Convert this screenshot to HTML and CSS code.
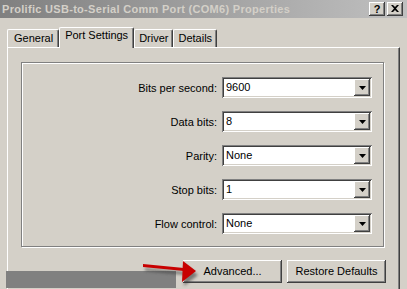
FILE: index.html
```html
<!DOCTYPE html>
<html lang="en">

<head>
  <meta charset="UTF-8">
  <title>Prolific USB-to-Serial Comm Port (COM6) Properties</title>
  <link rel="stylesheet" href="styles.css">
</head>

<body>

  <div class="window">

    <!-- title bar -->
    <div class="titlebar">
      <div class="title">Prolific USB-to-Serial Comm Port (COM6) Properties</div>
      <div class="caption-btn help">?</div>
      <div class="caption-btn close">
        <svg width="8" height="7" viewBox="0 0 8 7">
          <path d="M0 0h2l2 2 2-2h2L5 3.5 8 7H6L4 5 2 7H0l3-3.5z" fill="#000" />
        </svg>
      </div>
    </div>

    <!-- tabs -->
    <div class="tabs">
      <div class="tab">General</div>
      <div class="tab active">Port Settings</div>
      <div class="tab">Driver</div>
      <div class="tab">Details</div>
    </div>

    <div class="panel">
      <div class="group">
        <div class="row">
          <label>Bits per second:</label>
          <div class="combo"><span class="value">9600</span><span class="drop"><svg width="7" height="4"><path d="M0 0h7L3.5 4z" /></svg></span></div>
        </div>
        <div class="row">
          <label>Data bits:</label>
          <div class="combo"><span class="value">8</span><span class="drop"><svg width="7" height="4"><path d="M0 0h7L3.5 4z" /></svg></span></div>
        </div>
        <div class="row">
          <label>Parity:</label>
          <div class="combo"><span class="value">None</span><span class="drop"><svg width="7" height="4"><path d="M0 0h7L3.5 4z" /></svg></span></div>
        </div>
        <div class="row">
          <label>Stop bits:</label>
          <div class="combo"><span class="value">1</span><span class="drop"><svg width="7" height="4"><path d="M0 0h7L3.5 4z" /></svg></span></div>
        </div>
        <div class="row">
          <label>Flow control:</label>
          <div class="combo"><span class="value">None</span><span class="drop"><svg width="7" height="4"><path d="M0 0h7L3.5 4z" /></svg></span></div>
        </div>
      </div>

      <div class="actions">
        <div class="btn">Advanced...</div>
        <div class="btn">Restore Defaults</div>
      </div>
    </div>

    <!-- redacted strip and the red pointer drawn over the dialog -->
    <div class="redact"></div>
    <svg class="pointer" width="64" height="32" viewBox="0 0 64 32">
      <defs>
        <filter id="soft" x="-20%" y="-40%" width="140%" height="180%">
          <feGaussianBlur stdDeviation="1.6" />
        </filter>
      </defs>
      <g fill="#303030" opacity=".55" filter="url(#soft)" transform="translate(2 4)">
        <path d="M5 8L46 12V15L5 11z" />
        <path d="M45 5L58 15L44 26z" />
      </g>
      <g fill="#c80000">
        <path d="M5 8L46 12V15L5 11z" />
        <path d="M45 5L58 15L44 26z" />
      </g>
    </svg>

  </div>

</body>

</html>
```

FILE: styles.css
```css
* {
  margin: 0;
  padding: 0;
  box-sizing: border-box;
}

body {
  background-color: #d4d0c8;
  font: 11px "Liberation Sans", Arial, sans-serif;
  color: #000;
  overflow: hidden;
}

.window {
  width: 407px;
  height: 289px;
  overflow: hidden;
  position: relative;
}

/* 标题栏 */
.titlebar {
  height: 18px;
  background: linear-gradient(to right, #808080, #c0c0c0);
  display: flex;
  align-items: center;
  gap: 1px;
  padding: 0 4px 0 2px;
}

.title {
  flex: 1;
  color: #d4d0c8;
  font-weight: bold;
  letter-spacing: .3px;
  white-space: nowrap;
}

.caption-btn {
  width: 16px;
  height: 14px;
  background-color: #d4d0c8;
  box-shadow: inset -1px -1px #404040, inset 1px 1px #fff, inset -2px -2px #808080;
  display: flex;
  align-items: center;
  justify-content: center;
}

.caption-btn.help {
  font-weight: bold;
  font-size: 11px;
  line-height: 14px;
}

.caption-btn.close {
  margin-left: 1px;
  padding-bottom: 1px;
}

/* 选项卡 */
.tabs {
  height: 29px;
  display: flex;
  align-items: flex-end;
  padding-left: 7px;
}

.tab {
  height: 18px;
  padding: 0 4px;
  line-height: 17px;
  border-left: 1px solid #fff;
  border-top: 1px solid #fff;
  border-right: 1px solid #404040;
  border-radius: 2px 2px 0 0;
  box-shadow: inset -1px 0 #808080;
}

.tab:first-child {
  padding: 0 5px 0 6px;
}

.tab.active {
  height: 21px;
  margin-bottom: -1px;
  padding: 0 5px;
  line-height: 15px;
  background-color: #d4d0c8;
  position: relative;
  z-index: 1;
}

.panel {
  margin: 0 7px;
  height: 260px;
  padding: 14px 13px 0 13px;
  border-left: 1px solid #fff;
  border-top: 1px solid #fff;
  border-right: 1px solid #404040;
  box-shadow: inset -1px 0 #808080;
}

/* 分组框 */
.group {
  margin-right: 2px;
  padding: 14px 11px 12px;
  border: 1px solid #808080;
  box-shadow: inset 1px 1px #fff, 1px 1px #fff;
  display: flex;
  flex-direction: column;
  gap: 13px;
}

.row {
  display: flex;
  align-items: center;
  justify-content: flex-end;
  gap: 5px;
}

.combo {
  width: 150px;
  height: 21px;
  padding: 2px;
  background-color: #fff;
  box-shadow: inset 1px 1px #808080, inset -1px -1px #fff, inset 2px 2px #404040, inset -2px -2px #d4d0c8;
  display: flex;
}

.combo .value {
  flex: 1;
  padding-left: 2px;
  line-height: 17px;
}

.combo .drop {
  width: 16px;
  height: 17px;
  background-color: #d4d0c8;
  box-shadow: inset -1px -1px #404040, inset 1px 1px #fff, inset -2px -2px #808080;
  display: flex;
  align-items: center;
  justify-content: center;
}

.actions {
  margin-top: 13px;
  display: flex;
  justify-content: flex-end;
  gap: 5px;
}

.btn {
  width: 99px;
  height: 23px;
  line-height: 23px;
  text-align: center;
  background-color: #d4d0c8;
  box-shadow: inset -1px -1px #404040, inset 1px 1px #fff, inset -2px -2px #808080;
}

.redact {
  position: absolute;
  left: 6px;
  top: 271px;
  width: 170px;
  height: 17px;
  background-color: #808080;
}

.pointer {
  position: absolute;
  left: 138px;
  top: 256px;
}
```
